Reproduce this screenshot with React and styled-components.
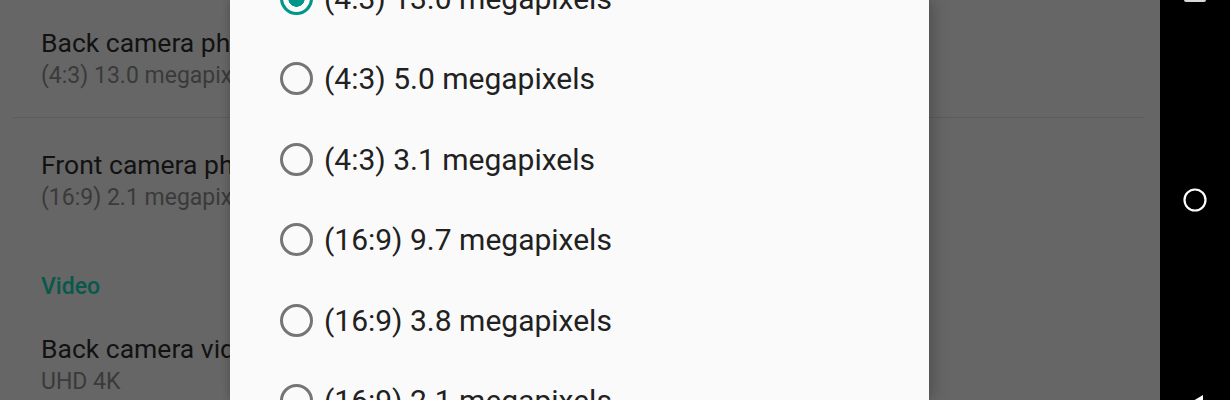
import styled, { createGlobalStyle } from "styled-components"

const GlobalStyle = createGlobalStyle`
    html, body {
        margin: 0;
        padding: 0;
        background: #666666;
        font-family: Roboto, "Noto Sans", sans-serif;
    }
    #root {
        height: 400px;
        overflow: hidden;
    }
`

const sizes = [
    "(4:3) 13.0 megapixels",
    "(4:3) 5.0 megapixels",
    "(4:3) 3.1 megapixels",
    "(16:9) 9.7 megapixels",
    "(16:9) 3.8 megapixels",
    "(16:9) 2.1 megapixels",
]

function Pref({ title, summary, divider }) {
    return (
        <PrefItem $divider={divider}>
            <PrefTitle>{title}</PrefTitle>
            <PrefSummary>{summary}</PrefSummary>
        </PrefItem>
    )
}

export default function App() {
    return (
        <Screen>
            <GlobalStyle />
            <Main>
                <SettingsList>
                    <Pref title="Back camera photo size" summary="(4:3) 13.0 megapixels" divider />
                    <Pref title="Front camera photo size" summary="(16:9) 2.1 megapixels" />
                    <Category>Video</Category>
                    <Pref title="Back camera video quality" summary="UHD 4K" />
                </SettingsList>

                <Dialog>
                    <Options>
                        {sizes.map((s, i) => (
                            <Option key={s}>
                                <Radio $checked={i === 0} />
                                <span>{s}</span>
                            </Option>
                        ))}
                    </Options>
                </Dialog>
            </Main>

            <NavBar>
                <RecentsIcon />
                <svg width="26" height="26" viewBox="0 0 26 26">
                    <circle cx="13" cy="13" r="10.5" fill="none" stroke="#ffffff" strokeWidth="2.2" />
                </svg>
                <BackIcon width="26" height="26" viewBox="0 0 26 26">
                    <path d="M23 1 L23 25 L3 13 Z" fill="#ffffff" />
                </BackIcon>
            </NavBar>
        </Screen>
    )
}

const Screen = styled.div`
    display: flex;
    width: 1230px;
    height: 400px;
    overflow: hidden;
`

const Main = styled.div`
    position: relative;
    flex: 1;
    background: #666666;
    overflow: hidden;
`

const SettingsList = styled.div`
    margin-top: -4px;
    padding-left: 41px;
`

const PrefItem = styled.div`
    padding: 30px 0 25px;
    margin-left: -28px;
    padding-left: 28px;
    margin-right: 15px;
    border-bottom: ${p => p.$divider ? "1px solid #5c5c5c" : "none"};
`

const PrefTitle = styled.div`
    font-size: 26.5px;
    line-height: 33px;
    color: #121212;
    white-space: nowrap;
`

const PrefSummary = styled.div`
    font-size: 23px;
    line-height: 33px;
    color: #3a3a3a;
    white-space: nowrap;
`

const Category = styled.div`
    padding-top: 33px;
    font-size: 23px;
    line-height: 30px;
    font-weight: 500;
    color: #08584c;
`

const Dialog = styled.div`
    position: absolute;
    top: 0;
    bottom: 0;
    left: 230px;
    width: 699px;
    background: #fafafa;
    box-shadow: 6px 0 14px rgba(0, 0, 0, 0.18), -2px 0 6px rgba(0, 0, 0, 0.12);
`

const Options = styled.div`
    margin-top: -42px;
    padding-left: 50px;
`

const Option = styled.div`
    display: flex;
    align-items: center;
    gap: 11px;
    height: 80.5px;
    font-size: 30px;
    color: #212121;
    white-space: nowrap;
`

const Radio = styled.span`
    box-sizing: border-box;
    width: 33px;
    height: 33px;
    border-radius: 50%;
    border: 3px solid ${p => p.$checked ? "#009688" : "#757575"};
    background: ${p => p.$checked ? "radial-gradient(circle, #009688 0 8px, transparent 8.5px)" : "transparent"};
    flex-shrink: 0;
`

const NavBar = styled.div`
    position: relative;
    width: 70px;
    background: #000000;
    display: flex;
    align-items: center;
    justify-content: center;
`

const RecentsIcon = styled.div`
    position: absolute;
    top: -20px;
    left: 24px;
    width: 18px;
    height: 18px;
    border: 2px solid #d8d8d8;
    border-radius: 2px;
`

const BackIcon = styled.svg`
    position: absolute;
    left: 20px;
    top: 394px;
`
